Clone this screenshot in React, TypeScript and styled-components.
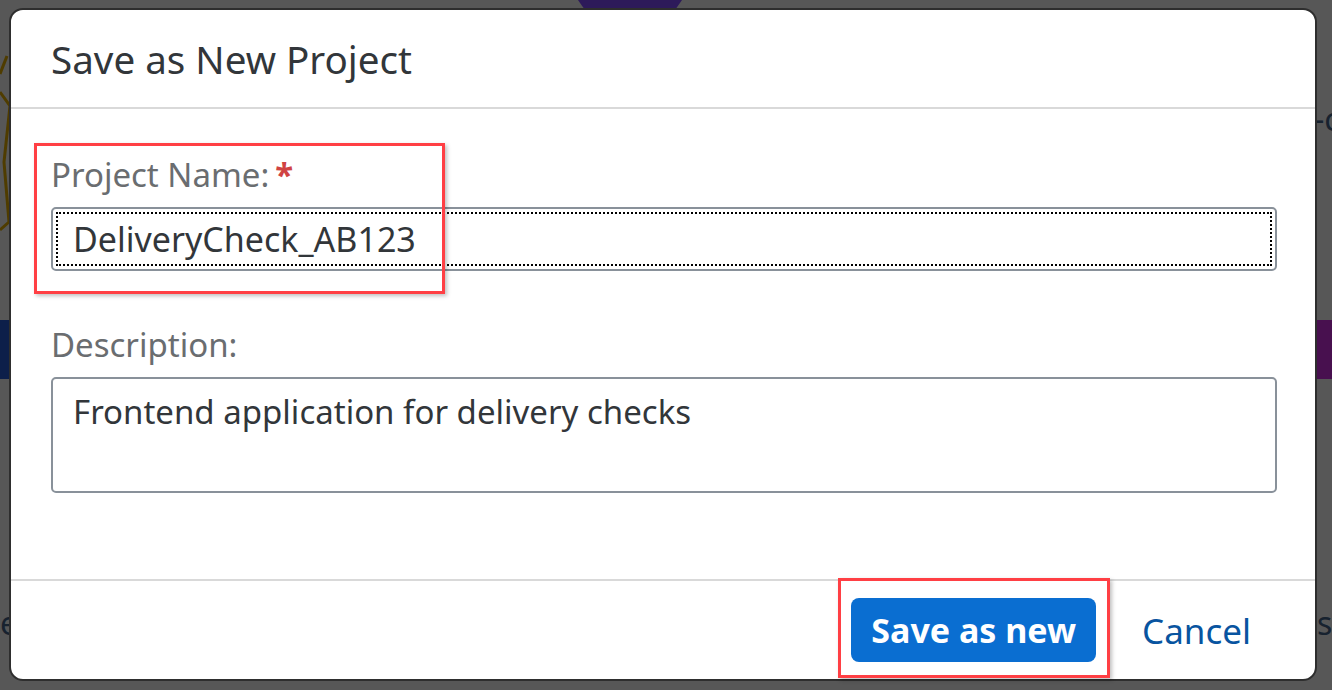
import styled, { createGlobalStyle } from 'styled-components';

const GlobalStyle = createGlobalStyle`
  html, body {
    margin: 0;
    padding: 0;
    width: 1332px;
    height: 690px;
    overflow: hidden;
    background: #575757;
  }
  * {
    box-sizing: border-box;
  }
`;

const FONT = `'Noto Sans', 'Open Sans', Arial, sans-serif`;

const App = () => {
  return (
    <>
      <GlobalStyle />
      <Backdrop>
        {/* bits of the page behind the dimmed overlay */}
        <BgTopTab />
        <BgBand side='left' />
        <BgBand side='right' />
        <BgLogo width='14' height='190' viewBox='0 0 14 190'>
          <path d='M0 22 L7 4' stroke='#4f3c00' strokeWidth='3' fill='none' />
          <path d='M0 40 L10 54 L4 110 L9 170 L0 178' stroke='#4f3c00' strokeWidth='3' fill='none' />
        </BgLogo>
        <BgText style={{ top: 100, left: 1314 }}>-c</BgText>
        <BgText style={{ top: 604, left: 1317 }}>s</BgText>
        <BgText style={{ top: 604, left: 0 }}>e</BgText>

        <Dialog>
          <Header>
            <Title>Save as New Project</Title>
          </Header>

          <Content>
            <Field>
              <Label>
                Project Name:<Required>*</Required>
              </Label>
              <Input focused>
                <span>DeliveryCheck_AB123</span>
              </Input>
            </Field>

            <Field>
              <Label>Description:</Label>
              <TextArea>Frontend application for delivery checks</TextArea>
            </Field>
          </Content>

          <Footer>
            <PrimaryButton>Save as new</PrimaryButton>
            <TransparentButton>Cancel</TransparentButton>
          </Footer>
        </Dialog>

        <Highlight style={{ left: 34, top: 143, width: 411, height: 151 }} />
        <Highlight style={{ left: 838, top: 578, width: 272, height: 100 }} />
      </Backdrop>
    </>
  );
};

const Backdrop = styled.div`
  position: relative;
  width: 1332px;
  height: 690px;
  padding: 8px 15px 9px 9px;
  display: flex;
  background: #575757;
  font-family: ${FONT};
`;

const BgTopTab = styled.div`
  position: absolute;
  left: 578px;
  top: 0;
  width: 104px;
  height: 9px;
  background: #2d1a5a;
  clip-path: polygon(0 0, 100% 0, 94% 100%, 6% 100%);
`;

const BgBand = styled.div<{ side: 'left' | 'right' }>`
  position: absolute;
  top: 320px;
  height: 59px;
  ${({ side }) => (side === 'left' ? 'left: 0; width: 10px; background: #0d1f4a;' : 'right: 0; width: 16px; background: #48104f;')}
`;

const BgLogo = styled.svg`
  position: absolute;
  left: 0;
  top: 52px;
`;

const BgText = styled.span`
  position: absolute;
  white-space: nowrap;
  font-size: 32px;
  line-height: 38px;
  color: #17222f;
`;

const Dialog = styled.div`
  position: relative;
  z-index: 1;
  flex: 1;
  display: flex;
  flex-direction: column;
  background: #ffffff;
  border: 2px solid #2e2e2e;
  border-radius: 14px;
  overflow: hidden;
`;

const Header = styled.div`
  height: 99px;
  padding: 0 40px;
  display: flex;
  align-items: center;
  border-bottom: 2px solid #d9d9d9;
`;

const Title = styled.h1`
  margin: 0;
  font-size: 38.6px;
  font-weight: 400;
  color: #32363a;
`;

const Content = styled.div`
  flex: 1;
  padding: 46px 38px 0 40px;
  display: flex;
  flex-direction: column;
  gap: 54px;
  border-bottom: 2px solid #d9d9d9;
`;

const Field = styled.div`
  display: flex;
  flex-direction: column;
  gap: 12px;
`;

const Label = styled.label`
  font-size: 33px;
  line-height: 40px;
  color: #6a6d70;
`;

const Required = styled.span`
  color: #d04343;
  font-weight: 700;
  margin-left: 6px;
`;

const Input = styled.div<{ focused?: boolean }>`
  position: relative;
  height: 64px;
  padding: 0 20px;
  display: flex;
  align-items: center;
  border: 2px solid #89919a;
  border-radius: 5px;
  font-size: 34px;
  color: #32363a;

  ${({ focused }) =>
    focused &&
    `
    &::after {
      content: '';
      position: absolute;
      inset: 3px;
      border: 2px dotted #000000;
      pointer-events: none;
    }
  `}
`;

const TextArea = styled.div`
  height: 116px;
  padding: 12px 20px;
  border: 2px solid #89919a;
  border-radius: 5px;
  font-size: 33px;
  line-height: 42px;
  color: #32363a;
`;

const Footer = styled.div`
  height: 98px;
  padding: 0 38px 0 0;
  display: flex;
  align-items: center;
  justify-content: flex-end;
  gap: 20px;
`;

const PrimaryButton = styled.button`
  height: 64px;
  padding: 0 20px;
  border: none;
  border-radius: 8px;
  background: #0a6ed1;
  color: #ffffff;
  font-family: ${FONT};
  font-size: 34px;
  font-weight: 700;
`;

const TransparentButton = styled.button`
  height: 64px;
  padding: 0 26px;
  border: none;
  background: transparent;
  color: #0854a0;
  font-family: ${FONT};
  font-size: 35px;
  font-weight: 400;
`;

const Highlight = styled.div`
  position: absolute;
  z-index: 2;
  border: 3px solid #ff3f44;
  box-shadow: 2px 2px 4px rgba(0, 0, 0, 0.25);
  pointer-events: none;
`;

export default App;
